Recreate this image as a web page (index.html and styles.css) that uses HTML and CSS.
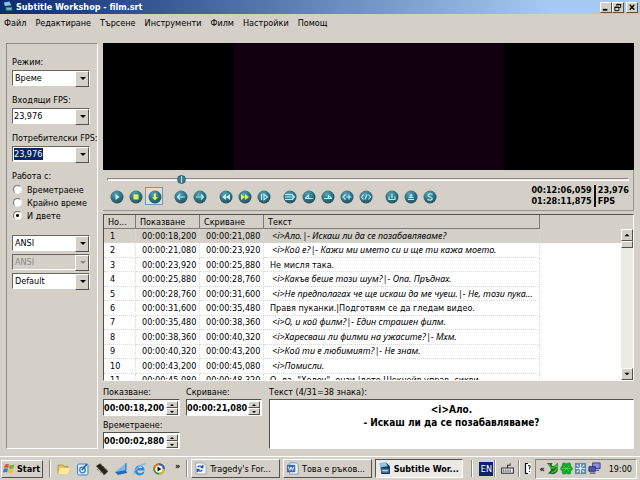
FILE: index.html
```
<!DOCTYPE html>
<html lang="bg">
<head>
<meta charset="utf-8">
<title>Subtitle Workshop - film.srt</title>
<link rel="stylesheet" href="styles.css">
</head>
<body>
<svg class="defs" aria-hidden="true">
  <defs>
    <radialGradient id="ball" cx="40%" cy="30%" r="75%">
      <stop offset="0" stop-color="#5fa3b4"/><stop offset=".55" stop-color="#2f7186"/><stop offset="1" stop-color="#234a5a"/>
    </radialGradient>
    <symbol id="app" viewBox="0 0 12 12">
      <path d="M2 1h6l3 3v7H3z" fill="#17354f"/><path d="M1 1l6-1 2 4-7 1z" fill="#8fc4e2"/><path d="M3 6h7v4H3z" fill="#3f7ba6"/><path d="M4 8h5" stroke="#cfe6f2"/>
    </symbol>
    <symbol id="ie" viewBox="0 0 14 14">
      <path d="M11.500 8.500H4.200a3 3 0 0 0 5.600 1.300h1.700A5 5 0 1 1 11.500 7z" fill="#2c8ad8"/><path d="M4.300 6h5a2.600 2.600 0 0 0-5 0" fill="#d8eefc"/><path d="M1 12C0 9 9 1 13 2" fill="none" stroke="#67b6ee" stroke-width="1.200"/>
    </symbol>
  </defs>
</svg>
<div class="desktop">
  <header class="titlebar">
    <svg class="app-icon"><use href="#app"/></svg>
    <h1>Subtitle Workshop - film.srt</h1>
    <div class="win-buttons">
      <button class="bevel" aria-label="Minimize"><svg viewBox="0 0 11 10"><path d="M2 7.500h5" stroke="#000" stroke-width="2"/></svg></button>
      <button class="bevel" aria-label="Restore"><svg viewBox="0 0 11 10"><path d="M4 3V1.500h4.500V5H7M2 4.500h4.500V8.500H2zM4 2h5M2 5h5" fill="none" stroke="#000"/></svg></button>
      <button class="bevel close" aria-label="Close"><svg viewBox="0 0 11 10"><path d="M3 2l5 5.500M8 2L3 7.500" stroke="#000" stroke-width="1.500"/></svg></button>
    </div>
  </header>
  <nav class="menu">
    <a href="#">Файл</a><a href="#">Редактиране</a><a href="#">Търсене</a><a href="#">Инструменти</a><a href="#">Филм</a><a href="#">Настройки</a><a href="#">Помощ</a>
  </nav>
  <main class="workspace">
    <aside class="side">
      <div class="field"><label for="mode">Режим:</label>
        <div class="combo"><select id="mode"><option>Време</option></select></div></div>
      <div class="field"><label for="fpsin">Входящи FPS:</label>
        <div class="combo number"><select id="fpsin"><option>23,976</option></select></div></div>
      <div class="field"><label for="fpsout">Потребителски FPS:</label>
        <div class="combo number"><input id="fpsout" class="selected" value="23,976" size="6"></div></div>
      <fieldset>
        <legend>Работа с:</legend>
        <label><input type="radio" name="work">Времетраене</label>
        <label><input type="radio" name="work">Крайно време</label>
        <label><input type="radio" name="work" checked>И двете</label>
      </fieldset>
      <div class="charsets">
        <div class="combo"><select aria-label="Input charset"><option>ANSI</option></select></div>
        <div class="combo off"><select aria-label="Output charset" disabled><option>ANSI</option></select></div>
        <div class="combo"><select aria-label="Style"><option>Default</option></select></div>
      </div>
    </aside>
    <div class="content">
      <div class="video"><div class="frame"></div></div>
      <section class="player">
        <input class="seek" type="range" min="0" max="1000" value="135" aria-label="Position">
        <div class="controls">
          <div class="group">
            <button aria-label="Play"><svg viewBox="0 0 14 14"><circle cx="7" cy="7" r="6.500"/><path class="f" d="M5.500 4l4 3-4 3z"/></svg></button>
            <button aria-label="Stop"><svg viewBox="0 0 14 14"><circle cx="7" cy="7" r="6.500"/><path class="y" d="M4.500 4.500h5v5h-5z"/></svg></button>
            <button class="pressed" aria-label="Scroll list"><svg viewBox="0 0 14 14"><circle cx="7" cy="7" r="6.500"/><path class="y" d="M6 3.500h2V7h2l-3 3.500L4 7h2z"/></svg></button>
          </div>
          <div class="group">
            <button aria-label="Previous subtitle"><svg viewBox="0 0 14 14"><circle cx="7" cy="7" r="6.500"/><path class="s" d="M11 7H3.500M6 4.500L3.500 7 6 9.500"/></svg></button>
            <button aria-label="Next subtitle"><svg viewBox="0 0 14 14"><circle cx="7" cy="7" r="6.500"/><path class="s" d="M3 7h7.500M8 4.500L10.500 7 8 9.500"/></svg></button>
          </div>
          <div class="group">
            <button aria-label="Rewind"><svg viewBox="0 0 14 14"><circle cx="7" cy="7" r="6.500"/><path class="f" d="M7 4v6L3 7zM11 4v6L7 7z"/></svg></button>
            <button aria-label="Forward"><svg viewBox="0 0 14 14"><circle cx="7" cy="7" r="6.500"/><path class="y" d="M3 4v6l4-3zM7 4v6l4-3z"/></svg></button>
            <button aria-label="Playback rate"><svg viewBox="0 0 14 14"><circle cx="7" cy="7" r="6.500"/><path class="s" d="M4.500 4v6M7 4.200v5.600L10.500 7z"/></svg></button>
          </div>
          <div class="group">
            <button aria-label="Move subtitle"><svg viewBox="0 0 14 14"><circle cx="7" cy="7" r="6.500"/><path class="s" d="M2 4.500h8M2 7h9M2 9.500h8M9 4.500L11.500 7 9 9.500"/></svg></button>
            <button aria-label="Set show time"><svg viewBox="0 0 14 14"><circle cx="7" cy="7" r="6.500"/><path class="s" d="M3 8.500h8M3.500 8L6.500 5.500V8"/></svg></button>
            <button aria-label="Set hide time"><svg viewBox="0 0 14 14"><circle cx="7" cy="7" r="6.500"/><path class="s" d="M3 8.500h8M7.500 8V5.500L10.500 8"/></svg></button>
            <button aria-label="Start subtitle"><svg viewBox="0 0 14 14"><circle cx="7" cy="7" r="6.500"/><path class="s" d="M5.500 4.500L3 7l2.500 2.500M6.500 7h5M9 4.500v5"/></svg></button>
            <button aria-label="End subtitle"><svg viewBox="0 0 14 14"><circle cx="7" cy="7" r="6.500"/><path class="s" d="M4.500 4.500L2.500 7l2 2.500M9.500 4.500l2 2.500-2 2.500M8 4.500L6 9.500"/></svg></button>
          </div>
          <div class="group">
            <button aria-label="Mark first point"><svg viewBox="0 0 14 14"><circle cx="7" cy="7" r="6.500"/><path class="s" d="M4 6.500v3h6v-3M7 8V4"/></svg></button>
            <button aria-label="Mark last point"><svg viewBox="0 0 14 14"><circle cx="7" cy="7" r="6.500"/><path class="s" d="M4 9.500h6M4.500 7.500h5M7 7V4M5.500 5.500h3"/></svg></button>
            <button aria-label="Synchronize"><svg viewBox="0 0 14 14"><circle cx="7" cy="7" r="6.500"/><path class="s" d="M9.500 4.500C8 3.300 5 3.600 5 5.400S9.300 6.800 9.300 8.600 6 10.500 4.500 9.300"/></svg></button>
          </div>
          <div class="clock"><div>00:12:06,059<br>01:28:11,875</div><div class="fps">23,976<br>FPS</div></div>
        </div>
      </section>
      <section class="list">
        <div class="rows">
          <table>
            <colgroup><col class="c-no"><col class="c-time"><col class="c-time"><col class="c-text"><col></colgroup>
            <thead><tr><th>Но...</th><th>Показване</th><th>Скриване</th><th>Текст</th><th></th></tr></thead>
            <tbody>
              <tr class="current"><td>1</td><td>00:00:18,200</td><td>00:00:21,080</td><td class="it">&lt;i&gt;Ало.|- Искаш ли да се позабавляваме?</td><td></td></tr>
              <tr><td>2</td><td>00:00:21,080</td><td>00:00:23,920</td><td class="it">&lt;i&gt;Кой е?|- Кажи ми името си и ще ти кажа моето.</td><td></td></tr>
              <tr><td>3</td><td>00:00:23,920</td><td>00:00:25,880</td><td>Не мисля така.</td><td></td></tr>
              <tr><td>4</td><td>00:00:25,880</td><td>00:00:28,760</td><td class="it">&lt;i&gt;Какъв беше този шум?|- Опа. Пръднах.</td><td></td></tr>
              <tr><td>5</td><td>00:00:28,760</td><td>00:00:31,600</td><td class="it">&lt;i&gt;Не предполагах че ще искаш да ме чуеш.|- Не, този пука...</td><td></td></tr>
              <tr><td>6</td><td>00:00:31,600</td><td>00:00:35,480</td><td>Правя пуканки.|Подготвям се да гледам видео.</td><td></td></tr>
              <tr><td>7</td><td>00:00:35,480</td><td>00:00:38,360</td><td class="it">&lt;i&gt;О, и кой филм?|- Един страшен филм.</td><td></td></tr>
              <tr><td>8</td><td>00:00:38,360</td><td>00:00:40,320</td><td class="it">&lt;i&gt;Харесваш ли филми на ужасите?|- Мхм.</td><td></td></tr>
              <tr><td>9</td><td>00:00:40,320</td><td>00:00:43,200</td><td class="it">&lt;i&gt;Кой ти е любимият?|- Не знам.</td><td></td></tr>
              <tr><td>10</td><td>00:00:43,200</td><td>00:00:45,080</td><td class="it">&lt;i&gt;Помисли.</td><td></td></tr>
              <tr><td>11</td><td>00:00:45,080</td><td>00:00:48,320</td><td>О, да. "Хелоу", онзи |дето Шекуейв управ. сикви.</td><td></td></tr>
            </tbody>
          </table>
        </div>
        <div class="scroll">
          <button class="bevel" aria-label="Scroll up"><svg viewBox="0 0 12 11"><path d="M3 7h6L6 4z"/></svg></button>
          <div class="thumb bevel"></div>
          <button class="bevel down" aria-label="Scroll down"><svg viewBox="0 0 12 11"><path d="M3 4h6L6 7z"/></svg></button>
        </div>
      </section>
      <section class="editor">
        <div class="times">
          <div><label for="show">Показване:</label><div class="spin"><input id="show" value="00:00:18,200" size="8"><span class="steps"><button class="bevel" aria-label="Up"></button><button class="bevel" aria-label="Down"></button></span></div></div>
          <div><label for="hide">Скриване:</label><div class="spin"><input id="hide" value="00:00:21,080" size="8"><span class="steps"><button class="bevel" aria-label="Up"></button><button class="bevel" aria-label="Down"></button></span></div></div>
          <div><label for="dur">Времетраене:</label><div class="spin"><input id="dur" value="00:00:02,880" size="8"><span class="steps"><button class="bevel" aria-label="Up"></button><button class="bevel" aria-label="Down"></button></span></div></div>
        </div>
        <div class="text"><label for="text">Текст (4/31=38 знака):</label><textarea id="text">&lt;i&gt;Ало.
- Искаш ли да се позабавляваме?</textarea></div>
      </section>
    </div>
  </main>
  <footer class="taskbar">
    <button class="start bevel"><svg viewBox="0 0 14 14"><path d="M2 3c2-1.500 3-1 4.500-.3L5.600 6.500C4 5.800 3 5.700 1 6.700z" fill="#e2532a"/><path d="M7.300 3c2 .9 3 .7 5-.2l-1 4c-2 .8-3 .8-5 0z" fill="#6fb03a"/><path d="M.8 7.500c2-1 3-.8 4.600-.2l-1 4c-1.500-.8-2.500-.8-4.400.1z" fill="#3f79d8"/><path d="M6.200 7.600c1.800.8 3 .7 5-.1l-1 4c-2 .9-3 .7-5-.1z" fill="#f3c22c"/></svg>Start</button>
    <span class="sep"></span>
    <div class="quick">
      <a href="#" aria-label="Folder"><svg viewBox="0 0 14 14"><path d="M1 3h5l1 1.500h4V12H1z" fill="#e8c25c" stroke="#a88535" stroke-width=".7"/><path d="M3 6h10l-2 6.500H1z" fill="#fbe9a0"/></svg></a>
      <a href="#" aria-label="Desktop"><svg viewBox="0 0 14 14"><rect x="1.500" y="2" width="10.500" height="11" rx="1.500" fill="#d9ebfa" stroke="#3e83c4"/><circle cx="6.500" cy="8" r="2.800" fill="none" stroke="#3e83c4" stroke-width="1.300"/><path d="M6 8l5-6" stroke="#225c9d" stroke-width="1.500"/></svg></a>
      <a href="#" aria-label="Device"><svg viewBox="0 0 14 14"><path d="M1 4l4-2.500 8 8-3.500 3.500z" fill="#26261a"/><path d="M2 7l7 6M5 1.500l8 7" stroke="#55513a" stroke-dasharray="1 1"/></svg></a>
      <a href="#" aria-label="Mail"><svg viewBox="0 0 14 14"><path d="M12 1L1 10l11-2z" fill="#76b7ed"/><path d="M1 10l3 3 9-2-1-3z" fill="#2668ba"/><path d="M12 1v7" stroke="#2461ae"/></svg></a>
      <a href="#" aria-label="Internet Explorer"><svg><use href="#ie"/></svg></a>
      <a href="#" aria-label="Media Player"><svg viewBox="0 0 14 14"><circle cx="7" cy="7" r="4.800" fill="#fff" stroke="#3d8e3b" stroke-width="2"/><path d="M2.200 7A4.800 4.800 0 0 1 7 2.200" fill="none" stroke="#e2742a" stroke-width="2"/><path d="M7 2.200A4.800 4.800 0 0 1 11.800 7" fill="none" stroke="#2d62b5" stroke-width="2"/><path d="M11.800 7A4.800 4.800 0 0 1 7 11.800" fill="none" stroke="#e8b42c" stroke-width="2"/><path d="M5.500 4.500l4 2.500-4 2.500z" fill="#111"/></svg></a>
    </div>
    <b class="more">»</b>
    <span class="sep"></span>
    <div class="tasks">
      <button class="bevel"><svg viewBox="0 0 14 14"><path d="M2 1h8l3 3v9H2z" fill="#fff" stroke="#8ea1b8"/><path d="M4 5.500a3 3 0 0 1 5 0M9.500 3v3H7M9 8.500a3 3 0 0 1-5 0M3.500 11V8H6" fill="none" stroke="#1853b8" stroke-width="1.400"/></svg>Tragedy's For...</button>
      <button class="bevel"><svg viewBox="0 0 14 14"><path d="M4 1h7l2 2v10H4z" fill="#fff" stroke="#7992bd"/><path d="M1 3h9v8H1z" fill="#3767b7"/><path d="M2.500 5l1.500 4 1.500-3.500L7 9l1.500-4" fill="none" stroke="#fff"/></svg>Това е ръков...</button>
      <button class="bevel active"><svg><use href="#app"/></svg>Subtitle Wor...</button>
    </div>
    <span class="sep"></span>
    <span class="lang">EN</span>
    <span class="sep"></span>
    <svg class="kbd" viewBox="0 0 14 12"><path d="M1.500 5.500h11v5h-11zM7 5V3h2.500V1" fill="#eee" stroke="#333"/><path d="M3 7.500h8M3 9h8" stroke="#333" stroke-dasharray="1 1"/></svg>
    <span class="sep"></span>
    <svg class="help" viewBox="0 0 8 12"><path d="M1 1h6v10H1z" fill="#fff"/><path d="M4 1H1.500v10H4" fill="none" stroke="#111" stroke-width="1.200"/><path d="M4 3.500c2-1 3 .5 1.500 2V7M5.500 8.500v1" fill="none" stroke="#332" stroke-width="1.100"/></svg>
    <div class="tray">
      <b>«</b>
      <svg viewBox="0 0 14 14"><path d="M1 1h6L6 3.500c1 2 3 1 6-2.500l1 1v6c-1 4-4 5.500-7 5l-4-.5 3-3C6 8 4 5 1 1z" fill="#176a20"/><path d="M3 2c1 4 3 5 5 4.500L12 3v4c-2 3-4 4-6 4.500" fill="none" stroke="#45c03c" stroke-width="1.500"/></svg>
      <svg viewBox="0 0 14 14"><g fill="#17a42c"><circle cx="4.700" cy="3.200" r="2.700"/><circle cx="9.300" cy="3.200" r="2.700"/><circle cx="11" cy="7" r="2.700"/><circle cx="9.300" cy="10.800" r="2.700"/><circle cx="4.700" cy="10.800" r="2.700"/><circle cx="3" cy="7" r="2.700"/><circle cx="7" cy="7" r="3"/></g><path d="M4 4l6 6M10 4l-6 6M2 7h10" stroke="#58d657" stroke-width=".8"/></svg>
      <svg viewBox="0 0 14 14"><path d="M1 1h12v12H1z" fill="#5c86b4"/><path d="M7 2v3M7 9v3M2 7h3M9 7h3M3 3l2 2M11 3L9 5M3 11l2-2M11 11L9 9" stroke="#e5f1fb" stroke-width="1.300"/><circle cx="7" cy="7" r="1.500" fill="#fff"/></svg>
      <svg viewBox="0 0 14 14"><path d="M5 1h8v6H5z" fill="#8f8fd9" stroke="#343682"/><path d="M1 5h7v5H1z" fill="#5057b8" stroke="#2c2f78"/><path d="M2 12h6M9 9h3" stroke="#53567f" stroke-width="1.500"/></svg>
      <time>19:00</time>
    </div>
  </footer>
</div>
</body>
</html>
```
FILE: styles.css
```
* { box-sizing: border-box; }
body {
  margin: 0;
  background: #d4d0c8;
  color: #000;
  font: 9px/12px "DejaVu Sans Condensed", "DejaVu Sans", sans-serif;
}
button, input, select, textarea { font: inherit; color: inherit; margin: 0; padding: 0; border: 0; background: none; border-radius: 0; }
svg { display: block; flex: none; }
.defs { position: absolute; width: 0; height: 0; }
.desktop { display: flex; flex-direction: column; min-height: 100vh; }
.bevel {
  background: #d4d0c8;
  border: 1px solid;
  border-color: #fff #55524d #55524d #fff;
}

/* title bar */
.titlebar { display: flex; align-items: center; height: 14px; padding: 0 2px 0 3px; background: linear-gradient(90deg, #0c2a70, #a6caf0 86%); }
.app-icon { width: 11px; height: 12px; margin-right: 2px; }
h1 { flex: 1; margin: 0; color: #fff; font: bold 9px/14px "DejaVu Sans Condensed", sans-serif; }
.win-buttons { display: flex; }
.win-buttons button { width: 12px; height: 11px; }
.win-buttons .close { margin-left: 2px; }
.win-buttons svg { width: 10px; height: 9px; }

.menu { display: flex; gap: 9px; padding: 3px 4px 0; height: 29px; }
.menu a { color: inherit; text-decoration: none; }

/* workspace */
.workspace { display: flex; flex: 1; gap: 5px; padding: 0 6px 7px; }
.side { flex: none; width: 92px; padding: 12px 7px 0 5px; border: 1px solid; border-color: #8d8a84 #fff #fff #8d8a84; }
.field { margin-bottom: 8px; white-space: nowrap; }
.field label { display: block; height: 14px; }
.combo {
  display: flex; align-items: center; position: relative; height: 16px; width: 78px; padding-left: 1px;
  background: #fff; border: 1px solid; border-color: #6a6762 #fff #fff #6a6762;
}
.combo select, .combo input { flex: 1; width: 100%; height: 12px; appearance: none; line-height: 12px; }
.combo select { padding-left: 1px; }
.combo.number select { padding-left: 0; }
.combo .selected { flex: none; width: 29px; background: #0a246a; color: #fff; }
.combo::before {
  content: ""; position: absolute; right: 0; top: 0; width: 12px; height: 14px; pointer-events: none;
  background: #d4d0c8; border: 1px solid; border-color: #fff #55524d #55524d #fff;
}
.combo::after {
  content: ""; position: absolute; right: 3px; top: 6px; pointer-events: none;
  border: 3px solid transparent; border-top-color: #000; border-bottom: 0;
}
.off { background: #d4d0c8; color: #8b8882; }
.off select { opacity: 1; color: inherit; }
.combo.off::after { border-top-color: #8b8882; }
fieldset { margin: 0; padding: 0; border: 0; }
legend { padding: 0; margin-bottom: 1px; }
fieldset label { display: flex; align-items: center; gap: 5px; height: 13px; white-space: nowrap; }
fieldset input {
  appearance: none; width: 9px; height: 9px; margin-left: 1px; background: #fff; border: 1px solid;
  border-color: #77746e #eee #eee #77746e; border-radius: 50%;
}
fieldset input:checked { background: radial-gradient(circle, #000 1px, #fff 2px); }
.charsets { display: flex; flex-direction: column; gap: 3px; margin-top: 13px; }

.content { flex: 1; min-width: 0; display: flex; flex-direction: column; }
.video { flex: 1; min-height: 127px; background: #000; display: flex; justify-content: center; }
.frame { width: 51%; background: #100010; }
.player { height: 41px; padding: 4px 4px 0; border: solid; border-width: 0 1px 1px 0; border-color: #99958e; }
.seek { appearance: none; display: block; width: 100%; height: 10px; }
.seek::-webkit-slider-runnable-track { height: 3px; background: #eeece6; border: 1px solid; border-color: #8a8780 #fff #fff #8a8780; }
.seek::-webkit-slider-thumb { appearance: none; width: 9px; height: 9px; margin-top: -4px; border-radius: 50%; border: 1px solid #27596a; background: linear-gradient(90deg, #3d8192 3px, #bfe0e5 3px 4px, #3d8192 4px); }
.controls { display: flex; align-items: center; gap: 8px; height: 23px; }
.group { display: flex; gap: 1px; }
.group button { width: 18px; height: 18px; padding: 2px; border: 1px solid transparent; display: grid; place-items: center; }
.group .pressed { border-color: #7d93a8; background: #dedcd8; }
.group svg { width: 14px; height: 14px; }
.group circle { fill: url(#ball); }
.f { fill: #bdf4e8; }
.y { fill: #d8f45a; }
.s { fill: none; stroke: #b2f0ee; stroke-width: 1.200; }
.clock { display: flex; gap: 2px; margin-left: auto; font: bold 9px/11px "DejaVu Sans Condensed", sans-serif; white-space: nowrap; }
.fps { border-left: 2px solid #111; padding-left: 2px; }

/* subtitle list */
.list { display: flex; height: 167px; margin-top: 3px; background: #fff; border: 1px solid; border-color: #55524d #fff #fff #55524d; overflow: hidden; }
.rows { flex: 1; min-width: 0; overflow: hidden; }
table { width: 100%; height: 173px; table-layout: fixed; border-collapse: separate; border-spacing: 0; }
.c-no { width: 32px; }
.c-time { width: 64px; }
.c-text { width: 276px; }
th, td { padding: 0 0 0 6px; height: 14px; line-height: 12px; text-align: left; font-weight: normal; white-space: nowrap; overflow: hidden; }
th { padding-left: 4px; background: #d4d0c8; border: solid #7d7a74; border-width: 0 1px 1px 0; }
th:last-child { border: 0; }
td { border: dotted #dcdad5; border-width: 0 1px 1px 0; }
td:last-child { border: 0; }
.it { font-family: "Noto Sans", "DejaVu Sans Condensed", sans-serif; font-style: italic; padding-left: 8px; }
.current td { background: #d4d0c8; }
.scroll { flex: none; width: 12px; padding-top: 14px; display: flex; flex-direction: column; background: linear-gradient(#d4d0c8 14px, #eceae5 14px); }
.scroll button { height: 12px; }
.scroll svg { width: 10px; height: 10px; }
.thumb { height: 7px; }
.down { margin-top: auto; }

/* editor */
.editor { display: flex; gap: 7px; padding-top: 5px; }
.times { display: grid; grid-template-columns: 77px 76px; gap: 3px 6px; }
.editor label { display: block; height: 13px; }
.spin { display: flex; align-items: center; height: 17px; padding: 1px 1px 1px 0; background: #fff; border: 1px solid; border-color: #55524d #fff #fff #55524d; }
.spin input { flex: 1; min-width: 0; font-weight: bold; }
.steps { display: flex; flex-direction: column; width: 12px; }
.steps button { position: relative; height: 7px; }
.steps button::after { content: ""; position: absolute; left: 3px; top: 2px; border: 2px solid transparent; border-top: 0; border-bottom-color: #000; }
.steps button + button::after { border-top: 2px solid #000; border-bottom: 0; }
.text { flex: 1; display: flex; flex-direction: column; }
textarea { flex: 1; width: 100%; min-height: 50px; padding: 3px 2px; resize: none; overflow: hidden; background: #fff; border: 1px solid; border-color: #55524d #fff #fff #55524d; font: bold 10px/13px "DejaVu Sans Condensed", sans-serif; text-align: center; }

/* taskbar */
.taskbar { display: flex; align-items: center; height: 24px; padding: 0 3px 0 1px; border-top: 1px solid #fff; white-space: nowrap; }
.start { display: flex; align-items: center; gap: 1px; width: 42px; height: 18px; padding-left: 1px; font-weight: bold; }
.start svg { width: 13px; height: 13px; }
.sep { width: 2px; height: 17px; margin: 0 6px; border-left: 1px solid #8d8a84; border-right: 1px solid #fff; }
.quick { display: flex; gap: 5px; }
.quick svg { width: 14px; height: 14px; }
.more { margin: 0 3px 6px 9px; }
.taskbar .more + .sep { margin: 0 3px; }
.tasks { display: flex; flex: 1; gap: 3px; }
.tasks button { display: flex; align-items: center; gap: 3px; flex: 1; min-width: 0; height: 19px; padding-left: 2px; overflow: hidden; }
.tasks svg { width: 13px; height: 13px; }
.tasks .active { background: #eceae6; border-color: #55524d #fff #fff #55524d; font-weight: bold; }
.tasks + .sep { margin-left: 8px; }
.lang { width: 14px; height: 14px; background: #0a246a; color: #fff; text-align: center; line-height: 14px; }
.taskbar .lang + .sep { margin: 0 4px 0 1px; }
.kbd { width: 15px; height: 13px; }
.kbd + .sep { margin: 0 4px 0 3px; }
.help { width: 8px; height: 13px; }
.tray { display: flex; align-items: center; gap: 1px; height: 20px; margin-left: 3px; padding: 0 4px 0 3px; border: 1px solid; border-color: #8d8a84 #fff #fff #8d8a84; }
.tray svg { width: 13px; height: 13px; }
.tray time { margin-left: 7px; }
```
